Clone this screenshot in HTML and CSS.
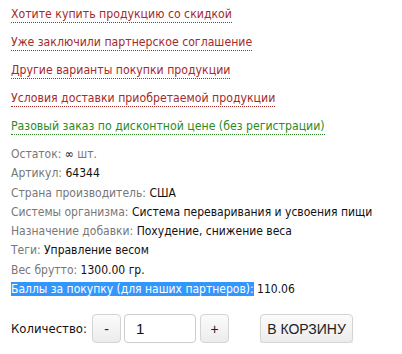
FILE: index.html
```html
<!DOCTYPE html>
<html lang="ru">
<head>
<meta charset="utf-8">
<link rel="stylesheet" href="styles.css">
</head>
<body>
<div class="page">
  <div class="links">
    <a class="link red" href="#">Хотите купить продукцию со скидкой</a>
    <a class="link red" href="#">Уже заключили партнерское соглашение</a>
    <a class="link red" href="#">Другие варианты покупки продукции</a>
    <a class="link red" href="#">Условия доставки приобретаемой продукции</a>
    <a class="link green" href="#">Разовый заказ по дисконтной цене (без регистрации)</a>
  </div>
  <div class="props">
    <div class="prop"><span class="lbl">Остаток:</span> <span class="val">∞</span><span class="lbl"> шт.</span></div>
    <div class="prop"><span class="lbl">Артикул:</span> <span class="val">64344</span></div>
    <div class="prop"><span class="lbl">Страна производитель:</span> <span class="val">США</span></div>
    <div class="prop"><span class="lbl">Системы организма:</span> <span class="val">Система переваривания и усвоения пищи</span></div>
    <div class="prop"><span class="lbl">Назначение добавки:</span> <span class="val">Похудение, снижение веса</span></div>
    <div class="prop"><span class="lbl">Теги:</span> <span class="val">Управление весом</span></div>
    <div class="prop"><span class="lbl">Вес брутто:</span> <span class="val">1300.00 гр.</span></div>
    <div class="prop"><span class="sel">Баллы за покупку (для наших партнеров):</span> <span class="val">110.06</span></div>
  </div>
  <div class="buy">
    <span class="qty-label">Количество:</span>
    <button class="btn small" type="button">-</button>
    <input class="qty" type="text" value="1">
    <button class="btn small" type="button">+</button>
    <button class="btn cart" type="button">В КОРЗИНУ</button>
  </div>
</div>
</body>
</html>
```
FILE: styles.css
```css
html, body {
  margin: 0;
  padding: 0;
  background: #fff;
}
.page {
  padding: 6px 0 0 11px;
  font-family: "DejaVu Sans Condensed", "DejaVu Sans", sans-serif;
  font-size: 12px;
}
.links {
  display: flex;
  flex-direction: column;
  align-items: flex-start;
  gap: 11px;
}
.link {
  display: inline-block;
  font-size: 12.2px;
  line-height: 16px;
  text-decoration: none;
  border-bottom: 1px dotted currentColor;
}
.red { color: #a52a2a; }
.green { color: #2b8a1f; }
.props {
  margin-top: 10px;
  display: flex;
  flex-direction: column;
  align-items: flex-start;
}
.prop {
  font-size: 12px;
  line-height: 19.3px;
  color: #111;
}
.lbl { color: #777; }
.val { color: #111; }
.sel {
  background: #3297fd;
  color: #fff;
}
.buy {
  margin-top: 15px;
  display: flex;
  align-items: center;
  height: 29px;
}
.qty-label {
  font-size: 13px;
  color: #111;
  width: 81px;
}
.btn {
  height: 29px;
  border: 1px solid #d4d4d4;
  border-radius: 4px;
  background: linear-gradient(#fbfbfb, #ececec);
  font-family: "Liberation Sans", Arial, sans-serif;
  color: #222;
  padding: 0;
}
.small {
  width: 29px;
  font-size: 14px;
}
.qty {
  box-sizing: border-box;
  width: 72px;
  height: 29px;
  margin: 0 4px 0 3px;
  border: 1px solid #ccc;
  border-radius: 4px;
  padding: 0 0 0 11px;
  font-family: "Liberation Sans", Arial, sans-serif;
  font-size: 15px;
  color: #111;
}
.cart {
  width: 93px;
  margin-left: 31px;
  font-size: 14px;
  box-shadow: 0 1px 1px rgba(0,0,0,0.15);
}
```
